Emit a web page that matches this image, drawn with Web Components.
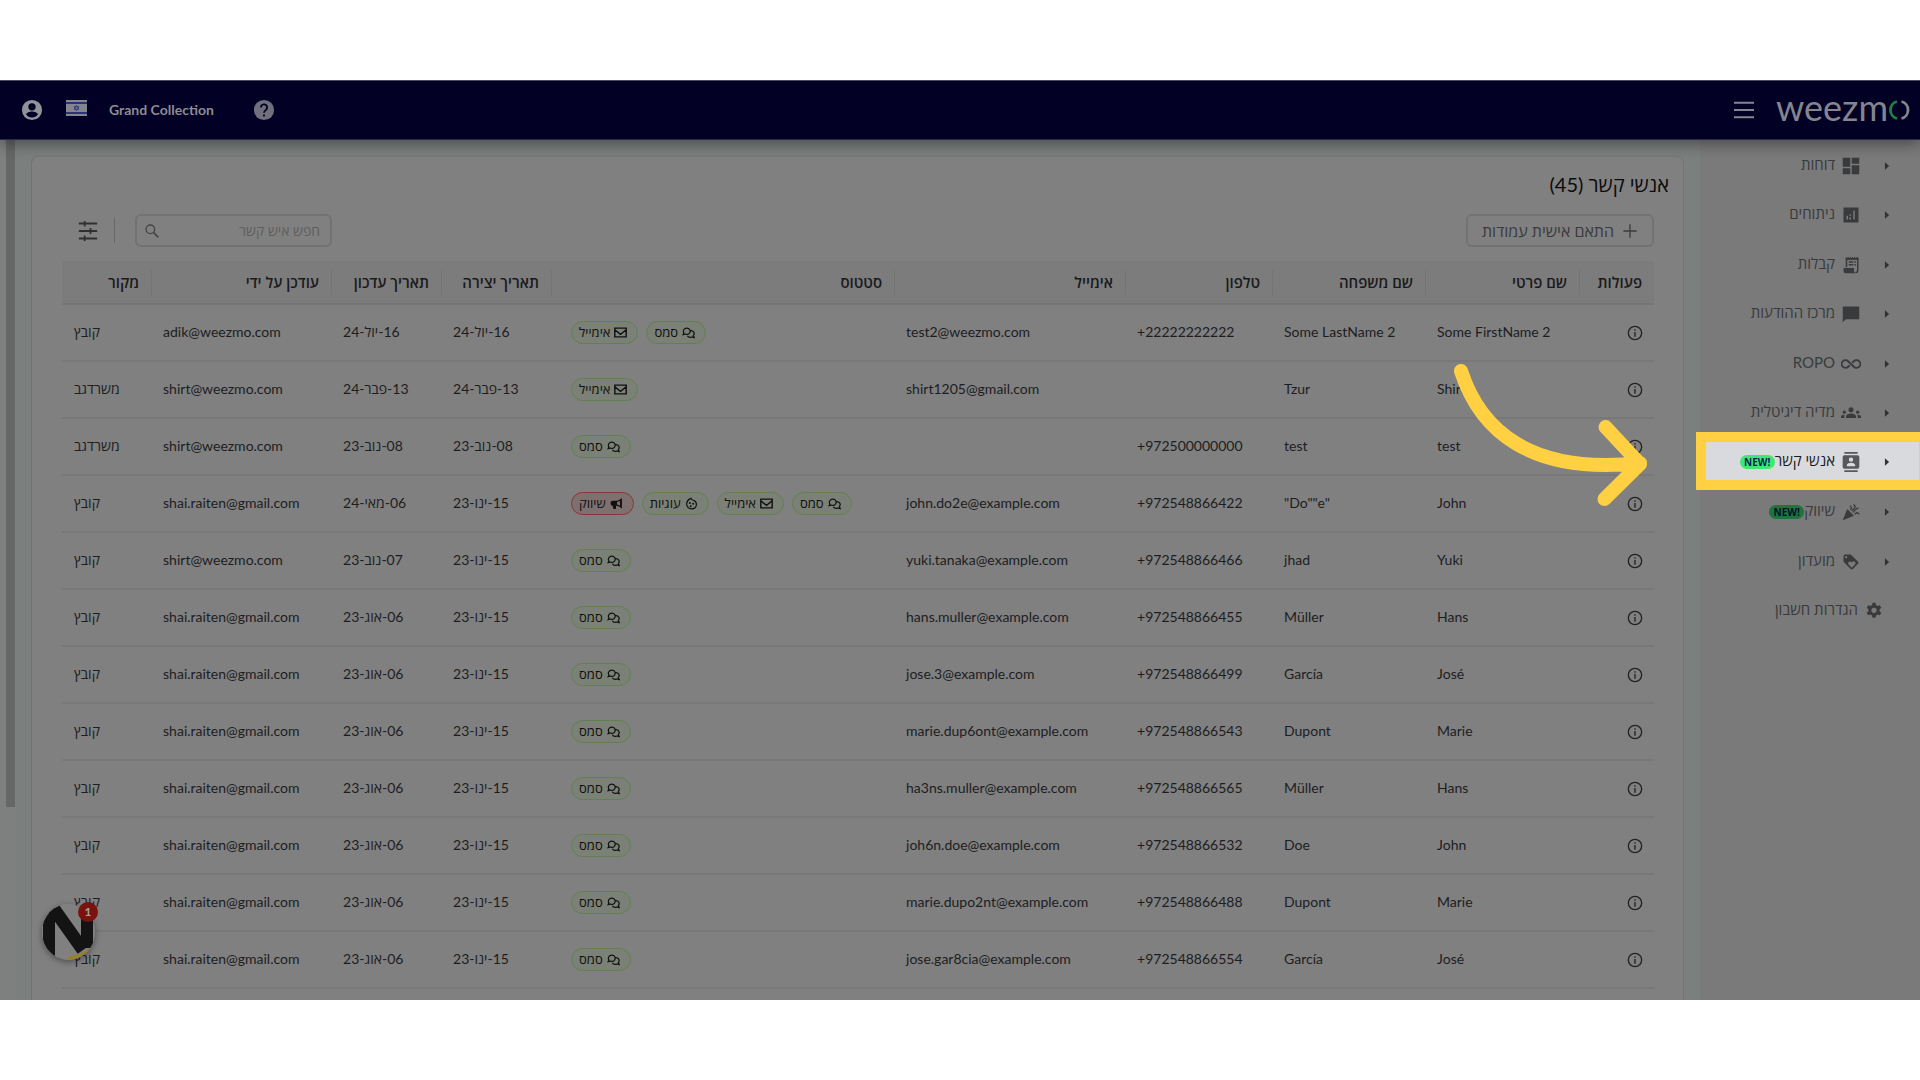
<!DOCTYPE html>
<html lang="he" dir="rtl">
<head>
<meta charset="utf-8">
<title>אנשי קשר</title>
<style>
html,body{margin:0;height:100%}
body{background:#fff;font-family:Lato,"Open Sans","Noto Sans","Liberation Sans",sans-serif;color:#111;overflow:hidden}
</style>
</head>
<body>
<wz-app></wz-app>
<script>
const ICONS={
user:'<path fill="currentColor" d="M12 1a11 11 0 1 0 0 22 11 11 0 0 0 0-22zm0 3.500a4 4 0 1 1 0 8 4 4 0 0 1 0-8zm0 15.600a7.900 7.900 0 0 1-6.400-3.300c0-2.100 4.300-3.300 6.400-3.300s6.400 1.200 6.400 3.300A7.900 7.900 0 0 1 12 20.100z"/>',
help:'<circle cx="12" cy="12" r="11" fill="currentColor"/><path d="M8.600 9.200a3.400 3.400 0 1 1 5.500 2.700c-1.200 1-2.100 1.600-2.100 3.200" fill="none" stroke="#020024" stroke-width="2"/><path d="M11 17h2v2.200h-2z" fill="#020024"/>',
menu:'<path d="M1 4h22M1 12h22M1 20h22" stroke="currentColor" stroke-width="2.200"/>',
plus:'<path d="M12 2v20M2 12h20" stroke="currentColor" stroke-width="2"/>',
search:'<circle cx="9.500" cy="9.500" r="6.500" fill="none" stroke="currentColor" stroke-width="2"/><path d="M14.500 14.500l7 7" stroke="currentColor" stroke-width="2.600"/>',
tune:'<path d="M1 3h22M1 12h22M1 21h22" stroke="currentColor" stroke-width="2.200"/><path d="M8 0v6.500M15 8.500v7M8 17.500V24" stroke="currentColor" stroke-width="2.200"/>',
info:'<circle cx="12" cy="12" r="10" fill="none" stroke="currentColor" stroke-width="2"/><path d="M12 10.500v7M12 6.500v2.200" stroke="currentColor" stroke-width="2"/>',
dash:'<path fill="currentColor" d="M1 1h10v12H1zM13 1h10v8H13zM1 15h10v8H1zM13 11h10v12H13z"/>',
chart:'<path fill="currentColor" fill-rule="evenodd" d="M2 2h20v20H2zM6 13v5h2v-5zM10 15v3h2v-3zM10 11v2h2v-2zM15 6v12h2V6z"/>',
receipt:'<path fill="none" stroke="currentColor" stroke-width="2" d="M6 15V3.500h15V19a3 3 0 0 1-3 3"/><path fill="currentColor" d="M2 16h14v4.500l2 2.500H5a3 3 0 0 1-3-3zM9 7h6v2H9zM9 10.500h6v2H9zM16.500 7h2v2h-2zM16.500 10.500h2v2h-2zM5 1l1.500 2L8 1l1.500 2L11 1l1.500 2L14 1l1.500 2L17 1l1.500 2L20 1l2 2v2H5z"/>',
chat:'<path fill="currentColor" d="M1 2h22v17H5l-4 4z"/>',
inf:'<path fill="none" stroke="currentColor" stroke-width="2.200" d="M13.500 10.500l1.900-1.800a4.600 4.600 0 1 1 0 6.600L8.600 8.700a4.600 4.600 0 1 0 0 6.600L10.500 13.500"/>',
group:'<g fill="currentColor"><circle cx="12" cy="8" r="3"/><circle cx="4" cy="11" r="2"/><circle cx="20" cy="11" r="2"/><path d="M6 18v-2c0-2 3-3.500 6-3.500s6 1.500 6 3.500v2zM0 18v-1.700C0 15 2 14 4.500 14.200c-.4.700-.5 1.200-.5 2V18zM24 18v-1.700c0-1.300-2-2.300-4.500-2.100.4.700.5 1.200.5 2V18z"/></g>',
contact:'<path fill="currentColor" fill-rule="evenodd" d="M4 0h16v2H4zM4 22h16v2H4zM4 4h16a2 2 0 0 1 2 2v12a2 2 0 0 1-2 2H4a2 2 0 0 1-2-2V6a2 2 0 0 1 2-2zM12 6.500a2.500 2.500 0 1 0 0 5.200 2.500 2.500 0 0 0 0-5.200zM7 17h10v-1.500c0-1.700-3.300-2.500-5-2.500s-5 .8-5 2.500z"/>',
party:'<path fill="currentColor" d="M1 23L7 8l9 9z"/><path fill="none" stroke="currentColor" stroke-width="1.800" d="M14.500 12.500l5-5a1.700 1.700 0 0 1 2.500 0M11 9l.7-.7a2.600 2.600 0 0 0 0-3.500L10.500 3.500M13 10.500l3.500-3.500a3 3 0 0 0 0-4L15.500 2M17 15l1-1a3 3 0 0 1 4 0l1 1"/>',
loyalty:'<path fill="currentColor" fill-rule="evenodd" d="M21.400 11.600l-9-9C12 2.200 11.500 2 11 2H4a2 2 0 0 0-2 2v7c0 .5.200 1 .6 1.400l9 9c.8.800 2 .8 2.800 0l7-7c.8-.8.800-2 0-2.800zM5.500 7a1.500 1.500 0 1 1 0-3 1.500 1.500 0 0 1 0 3zm11.800 8.300L13 19.500l-4.300-4.200a2.500 2.500 0 0 1 3.500-3.500l.8.700.7-.7a2.500 2.500 0 0 1 3.600 3.500z"/>',
gear:'<path fill="currentColor" fill-rule="evenodd" d="M10 1h4l.6 3 2.200 1.300 2.900-1 2 3.400-2.300 2v2.600l2.300 2-2 3.400-2.900-1-2.200 1.300-.6 3h-4l-.6-3-2.200-1.300-2.900 1-2-3.400 2.300-2V9.700l-2.300-2 2-3.400 2.900 1L9.400 4zM12 7.500a3.500 3.500 0 1 0 0 7 3.500 3.500 0 0 0 0-7z"/>',
tri:'<path fill="currentColor" d="M7 3l10 9-10 9z"/>',
mail:'<path fill="none" stroke="currentColor" stroke-width="2.600" d="M1.500 4h21v16h-21zM2 7.500l10 8 10-8"/>',
sms:'<path fill="none" stroke="currentColor" stroke-width="2.200" d="M2 16l1.500-3.200A6.300 5.800 0 1 1 8.500 15.500c-1 0-2-.2-2.800-.6L2 16zM15.500 8.500a6 5.500 0 0 1 5.500 9l1.500 4-4-1.200a6 5.500 0 0 1-8.500-2.500"/>',
cookie:'<path fill="none" stroke="currentColor" stroke-width="2.200" d="M11 2.500C12 5 14 6 17 6.500c3 2 4.500 5 4 8.500-.8 4-4.500 7-9 7s-9-3.500-9-8.500C3 9 6 4.500 11 2.500z"/><g fill="currentColor"><circle cx="9" cy="11" r="1.800"/><circle cx="15" cy="12.500" r="1.800"/><circle cx="10.500" cy="17" r="1.800"/></g>',
horn:'<path fill="currentColor" fill-rule="evenodd" d="M22 2v19l-2.500-1.500c-3-2-5-3-8.500-3.200V22H6.500l-1.800-6C3 16 1 14.500 1 11.500S3 7 5 7h5.500c4 0 6.500-1.500 9-3.500zM18.500 7c-2 1.200-3.500 2-5.500 2.300v4.500c2 .3 3.700 1.200 5.500 2.300z"/>'
};
class Base extends HTMLElement{
  paint(css,html){(this.shadowRoot||this.attachShadow({mode:'open'})).innerHTML='<style>:host,*{box-sizing:border-box}'+css+'</style>'+html}
}
customElements.define('wz-icon',class extends Base{
  connectedCallback(){
    const s=this.getAttribute('size')||16;
    this.paint(':host{display:inline-flex;flex:none}svg{display:block}',`<svg width="${s}" height="${s}" viewBox="0 0 24 24" aria-hidden="true">${ICONS[this.getAttribute('name')]}</svg>`);
  }
});
customElements.define('wz-header',class extends Base{
  connectedCallback(){this.paint(`
:host{display:block;position:relative;z-index:2}
header{direction:ltr;display:flex;align-items:center;height:60px;padding:0 10px 0 21px;background:#020024;border-top:1px solid #4b4b66;border-bottom:1px solid #2b2a4c;box-shadow:0 4px 14px rgba(0,0,0,.4);color:#929299}
button{all:unset;display:flex;cursor:pointer}
.flag{margin:0 22px 4px 23px;display:block}
.name{font:bold 14px/20px Lato,sans-serif;color:#8c8c94}
.help{margin-left:39px;color:#6f6f7d}
.menu{margin-left:auto;margin-right:21px;color:#858590}
.logo{display:flex;align-items:center;color:#85858d;direction:ltr}
.logo span{font:400 36px/40px Lato,sans-serif;margin-bottom:6px}
`,`<header>
<button aria-label="משתמש"><wz-icon name="user" size="22"></wz-icon></button>
<svg class="flag" width="21" height="16" viewBox="0 0 21 16"><path fill="#85858d" d="M0 0h21v16H0z"/><path fill="#2b3478" d="M0 2h21v2H0zM0 12h21v2H0z"/><path fill="none" stroke="#2b3478" stroke-width=".8" d="M10.500 5.200l2.400 4h-4.800zM10.500 10.700l2.400-4h-4.800z"/></svg>
<span class="name">Grand Collection</span>
<button class="help" aria-label="עזרה"><wz-icon name="help" size="22"></wz-icon></button>
<button class="menu" aria-label="תפריט"><wz-icon name="menu" size="22"></wz-icon></button>
<div class="logo"><span>weezm</span><svg width="22" height="20" viewBox="0 0 22 20"><path d="M9 1.500a8.800 8.800 0 0 0 0 17" fill="none" stroke="#1f8145" stroke-width="2.800"/><path d="M13.500 1.500a8.800 8.800 0 0 1 0 17" fill="none" stroke="#85858d" stroke-width="2.800"/></svg></div>
</header>`)}
});
customElements.define('wz-nav-item',class extends Base{
  connectedCallback(){
    const a=n=>this.getAttribute(n), leaf=this.hasAttribute('leaf');
    this.paint(`
:host{display:flex;align-items:center}
a{flex:1;display:flex;align-items:center;height:38px;padding-right:${leaf?36:28}px;color:#393a3c;text-decoration:none;font-size:15px;line-height:20px}
.tri{margin-left:21px;color:#303133}
.ico{display:flex;justify-content:center;width:20px;margin-left:6px}
.t{margin-bottom:4px}
.b{direction:ltr;width:35px;height:14px;border-radius:7px;background:#1f733c;color:#06102a;font:bold 10px/14px "Open Sans",sans-serif;text-align:center}
:host([active]) a{position:relative;z-index:1;margin:0 1px 3px 6px;padding:2px 27px 0 0;background:#d9dade;box-shadow:0 0 0 10px #ffd042;color:#1b1c1e}
:host([active]) .ico{color:#57585a}
:host([active]) .b{background:#3fe779;color:#0d1d52}
`,`<a href="#">${leaf?'':'<wz-icon class="tri" name="tri" size="10"></wz-icon>'}<span class="ico"><wz-icon name="${a('icon')}" size="${a('size')||18}"></wz-icon></span><span class="t"><slot></slot></span>${this.hasAttribute('new')?'<span class="b">NEW!</span>':''}</a>`)}
});
customElements.define('wz-sidebar',class extends Base{
  connectedCallback(){this.paint(`
:host{display:block;width:220px;flex:none;padding-top:1px;background:#7a7a7a}
nav{display:grid;grid-auto-rows:1fr;height:495px}
`,`<nav>
<wz-nav-item icon="dash">דוחות</wz-nav-item>
<wz-nav-item icon="chart">ניתוחים</wz-nav-item>
<wz-nav-item icon="receipt">קבלות</wz-nav-item>
<wz-nav-item icon="chat">מרכז ההודעות</wz-nav-item>
<wz-nav-item icon="inf" size="20">ROPO</wz-nav-item>
<wz-nav-item icon="group" size="20">מדיה דיגיטלית</wz-nav-item>
<wz-nav-item icon="contact" size="20" active new>אנשי קשר</wz-nav-item>
<wz-nav-item icon="party" new>שיווק</wz-nav-item>
<wz-nav-item icon="loyalty">מועדון</wz-nav-item>
<wz-nav-item icon="gear" leaf>הגדרות חשבון</wz-nav-item>
</nav>`)}
});
const CHIP={s:['sms','סמס'],m:['mail','אימייל'],c:['cookie','עוגיות'],h:['horn','שיווק']};
customElements.define('wz-chip',class extends Base{
  connectedCallback(){
    const k=this.getAttribute('kind');
    this.paint(`
:host{display:inline-flex;align-items:center;gap:4px;height:23px;padding:0 10px 0 7px;border:1px solid #62804f;border-radius:12px;background:#7b8176;color:#101010;font-size:13px;line-height:16px}
:host([kind=h]){border-color:#8a3533;background:#7f7070}
span{margin-bottom:2px}
`,`<wz-icon name="${CHIP[k][0]}" size="13"></wz-icon><span>${CHIP[k][1]}</span>`)}
});
const G='shai.raiten@gmail.com',K='קובץ',A='06-אוג-23',Y='15-ינו-23';
const ROWS=[
['Some FirstName 2','Some LastName 2','+22222222222','test2@weezmo.com','sm','16-יול-24','16-יול-24','adik@weezmo.com',K],
['Shirt','Tzur','','shirt1205@gmail.com','m','13-פבר-24','13-פבר-24','shirt@weezmo.com','משרדגב'],
['test','test','+972500000000','','s','08-נוב-23','08-נוב-23','shirt@weezmo.com','משרדגב'],
['John','"Do""e"','+972548866422','john.do2e@example.com','smch',Y,'06-מאי-24',G,K],
['Yuki','jhad','+972548866466','yuki.tanaka@example.com','s',Y,'07-נוב-23','shirt@weezmo.com',K],
['Hans','Müller','+972548866455','hans.muller@example.com','s',Y,A,G,K],
['José','García','+972548866499','jose.3@example.com','s',Y,A,G,K],
['Marie','Dupont','+972548866543','marie.dup6ont@example.com','s',Y,A,G,K],
['Hans','Müller','+972548866565','ha3ns.muller@example.com','s',Y,A,G,K],
['John','Doe','+972548866532','joh6n.doe@example.com','s',Y,A,G,K],
['Marie','Dupont','+972548866488','marie.dupo2nt@example.com','s',Y,A,G,K],
['José','García','+972548866554','jose.gar8cia@example.com','s',Y,A,G,K]];
const COLS=[['פעולות',75],['שם פרטי',154],['שם משפחה',153],['טלפון',147],['אימייל',231],['סטטוס',343],['תאריך יצירה',110],['תאריך עדכון',110],['עודכן על ידי',180],['מקור',89]];
customElements.define('wz-table',class extends Base{
  connectedCallback(){this.paint(`
:host{display:block}
table{width:100%;table-layout:fixed;border-collapse:separate;border-spacing:0;font-size:14px;line-height:20px;color:#1d1d1f}
th{height:44px;padding:0 12px;background:#7c7c7c;border-bottom:2px solid #757575;text-align:right;font-family:"Open Sans",sans-serif;font-size:15px;font-weight:600;white-space:nowrap;color:#1a1a1c}
th:not(:last-child){background:linear-gradient(#747474,#747474) 0 9px/1px 25px no-repeat #7c7c7c}
td{height:57px;padding:0 12px 2px;border-bottom:2px solid #787878;text-align:left;white-space:nowrap}
td:first-child{padding-right:11px;text-align:right}
td.l{direction:ltr}
.chips{display:flex;justify-content:flex-end;gap:8px;padding:2px 0 0 8px}
button{all:unset;display:inline-flex;vertical-align:middle;cursor:pointer;color:#222}
`,`<table><colgroup>${COLS.map(c=>`<col style="width:${(c[1]/15.92).toFixed(3)}%">`).join('')}</colgroup><thead><tr>${COLS.map(c=>`<th>${c[0]}</th>`).join('')}</tr></thead><tbody>${ROWS.map(r=>`<tr><td><button aria-label="מידע"><wz-icon name="info" size="16"></wz-icon></button></td>${r.map((v,i)=>i==4?`<td><div class="chips">${[...v].map(k=>`<wz-chip kind="${k}"></wz-chip>`).join('')}</div></td>`:`<td${i<4||i==7?' class="l"':''}>${v}</td>`).join('')}</tr>`).join('')}</tbody></table>`)}
});
customElements.define('wz-contacts',class extends Base{
  connectedCallback(){this.paint(`
:host{display:block;flex:1;min-width:0;padding:15px 16px 0}
section{height:100%;background:#808080;border:1px solid #717473;border-top:2px solid #777a79;border-bottom:0;border-radius:8px 8px 0 0;padding:14px 29px 0 30px;overflow:hidden}
h1{margin:0 -15px 0 0;font-size:20px;line-height:26px;font-weight:400;color:#0b0b0c}
.bar{display:flex;justify-content:space-between;align-items:center;margin:17px 0 14px}
.btn{all:unset;box-sizing:border-box;display:flex;align-items:center;gap:8px;height:33px;padding:0 14px;border:2px solid #727272;border-radius:6px;font-size:16px;line-height:20px;color:#3a3b3d;cursor:pointer}
.tools{display:flex;align-items:center}
label{display:flex;align-items:center;width:197px;height:33px;padding:0 10px 0 7px;border:2px solid #727272;border-radius:6px;color:#454545}
input{flex:1;min-width:0;border:0;outline:0;background:none;font:14px/20px Lato,"Open Sans",sans-serif;padding:0;color:#222}
input::placeholder{color:#5f5f5f;opacity:1}
.sep{width:1px;height:25px;background:#686868;margin:0 20px 0 16px}
.tune{all:unset;display:flex;margin-left:16px;color:#303030;cursor:pointer}
`,`<section><h1>אנשי קשר (45)</h1>
<div class="bar"><button class="btn"><wz-icon name="plus" size="16"></wz-icon><span>התאם אישית עמודות</span></button>
<div class="tools"><label aria-label="חפש איש קשר"><input type="text" placeholder="חפש איש קשר"><wz-icon name="search" size="16"></wz-icon></label><span class="sep"></span><button class="tune" aria-label="מסננים"><wz-icon name="tune" size="20"></wz-icon></button></div></div>
<wz-table></wz-table></section>`)}
});
customElements.define('wz-widget',class extends Base{
  connectedCallback(){this.paint(`
:host{position:absolute;left:42px;bottom:40px;width:53px;height:56px}
svg{display:block;border-radius:50%;box-shadow:0 2px 6px rgba(0,0,0,.4)}
b{position:absolute;top:-2px;right:-3px;width:20px;height:20px;border-radius:50%;background:#7a120e;color:#a9a0a0;font:bold 12px/20px Lato,sans-serif;text-align:center}
`,`<svg width="53" height="56" viewBox="0 0 53 56"><path fill="#808080" d="M0 0h53v56H0z"/><path d="M7 0v56M45 8v36" stroke="#131313" stroke-width="12"/><path d="M7 -2l34 48" stroke="#131313" stroke-width="13"/><path fill="none" stroke="#94802f" stroke-width="5" d="M26 55c10-1 18-4 27-12"/></svg><b>1</b>`)}
});
customElements.define('wz-app',class extends Base{
  connectedCallback(){this.paint(`
:host{display:block;height:100vh;padding:80px 0}
.app{position:relative;display:flex;flex-direction:column;height:100%;overflow:hidden;background:#7b7f7d}
.body{flex:1;min-height:0;display:flex}
.scroll{width:15px;flex:none;padding-left:6px;background:#7e807f}
.scroll i{display:block;height:667px;background:#656766}
.arrow{position:absolute;left:1452px;top:284px}
`,`<div class="app"><wz-header></wz-header><div class="body"><wz-sidebar></wz-sidebar><wz-contacts></wz-contacts><div class="scroll"><i></i></div></div>
<svg class="arrow" width="200" height="144" viewBox="0 0 200 144" fill="none" stroke="#ffd042" stroke-width="14" stroke-linecap="round" stroke-linejoin="round"><path d="M9 7C28 66 78 111 188 99M153.500 63L188 100 152.500 135"/></svg>
<wz-widget></wz-widget></div>`)}
});
</script>
</body>
</html>
